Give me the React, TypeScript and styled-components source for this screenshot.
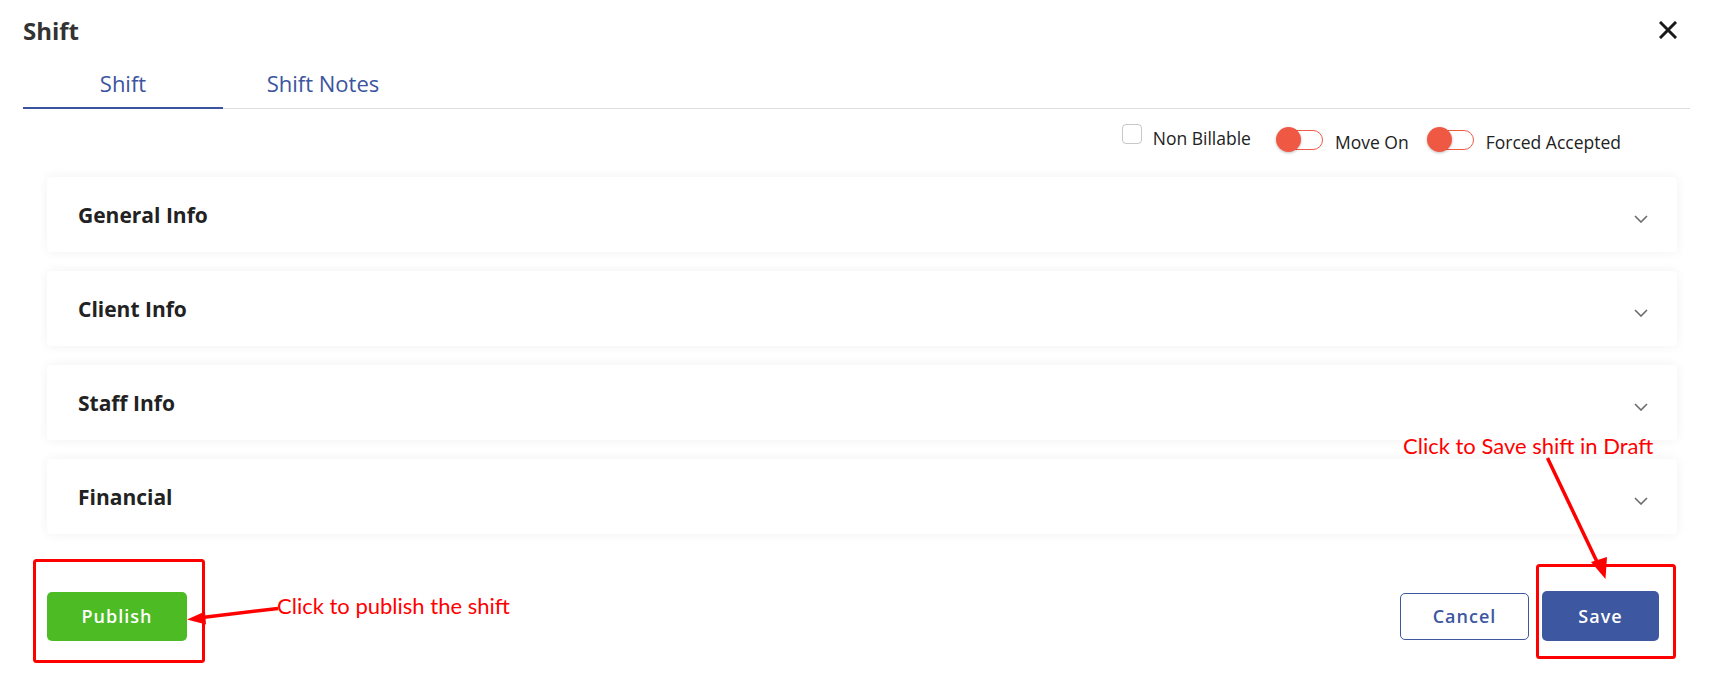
import React from "react";
import styled, { createGlobalStyle } from "styled-components";

const UI_FONT = `"Open Sans", "Noto Sans", Arial, sans-serif`;

const GlobalStyle = createGlobalStyle`
  html, body { margin: 0; padding: 0; background: #ffffff; }
  body { font-family: ${UI_FONT}; color: #222; }
  * { box-sizing: border-box; }
`;

const Page = styled.div`
  position: relative;
  width: 1710px;
  height: 680px;
  padding: 0 20px 0 23px;
  overflow: hidden;
`;

const Header = styled.div`
  height: 62px;
  display: flex;
  align-items: center;
  justify-content: space-between;
  padding-right: 13px;
`;

const Title = styled.h1`
  margin: 0;
  font-size: 24px;
  line-height: 1;
  font-weight: 700;
  color: #333333;
`;

const CloseButton = styled.button`
  border: 0;
  background: transparent;
  padding: 0;
  width: 18px;
  height: 18px;
  display: flex;
  align-items: center;
  justify-content: center;
  margin-top: -2px;
  cursor: pointer;
`;

const TabList = styled.div`
  display: flex;
  height: 47px;
  border-bottom: 1px solid #dedede;
`;

const Tab = styled.div<{ $active?: boolean }>`
  width: 200px;
  display: flex;
  align-items: center;
  justify-content: center;
  padding-bottom: 4px;
  margin-bottom: -1px;
  font-size: 22px;
  font-weight: 500;
  color: #3b54a0;
  border-bottom: 2px solid ${(p) => (p.$active ? "#3b54a0" : "transparent")};
`;

const OptionsRow = styled.div`
  height: 62px;
  display: flex;
  justify-content: flex-end;
  align-items: center;
  padding-right: 69px;
`;

const CheckGroup = styled.label`
  display: flex;
  align-items: flex-start;
  gap: 11px;
  margin-right: 25px;
  margin-top: -8px;
  font-size: 17.5px;
  color: #222;
`;

const CheckBox = styled.span`
  width: 20px;
  height: 20px;
  border: 1.5px solid #c8c8c8;
  border-radius: 4px;
  background: #fff;
`;

const CheckText = styled.span`
  line-height: 20px;
  margin-top: 4px;
`;

const ToggleGroup = styled.div<{ $last?: boolean }>`
  display: flex;
  align-items: center;
  gap: 12px;
  margin-right: ${(p) => (p.$last ? 0 : 18)}px;
  font-size: 17.5px;
  color: #222;
`;

const Switch = styled.span`
  position: relative;
  width: 47px;
  height: 26px;
  display: block;
`;

const SwitchTrack = styled.span`
  position: absolute;
  left: 4px;
  right: 0;
  top: 3px;
  height: 20px;
  border: 1.5px solid #f05a45;
  border-radius: 10px;
  background: #fff;
`;

const SwitchThumb = styled.span`
  position: absolute;
  left: 0;
  top: 0;
  width: 25px;
  height: 25px;
  border-radius: 50%;
  background: #ef5843;
  box-shadow: 0 1px 3px rgba(0, 0, 0, 0.25);
`;

const ToggleText = styled.span`
  margin-top: 3px;
`;

const Sections = styled.div`
  display: flex;
  flex-direction: column;
  gap: 19px;
  margin: 6px 13px 0 24px;
`;

const Card = styled.div`
  height: 75px;
  background: #fff;
  border-radius: 4px;
  box-shadow: 0 0 12px rgba(0, 0, 0, 0.06);
  display: flex;
  align-items: center;
  justify-content: space-between;
  padding: 0 29px 0 31px;
`;

const CardTitle = styled.h2`
  margin: 0;
  font-size: 21px;
  font-weight: 700;
  color: #222;
`;

const Chevron = styled.svg`
  margin-top: 9px;
`;

const Footer = styled.div`
  display: flex;
  align-items: center;
  justify-content: space-between;
  margin-top: 57px;
  padding: 0 31px 0 24px;
`;

const ButtonGroup = styled.div`
  display: flex;
  align-items: center;
  gap: 13px;
`;

const Button = styled.button<{ $variant: "publish" | "cancel" | "save" }>`
  font-family: ${UI_FONT};
  font-size: 18px;
  font-weight: 600;
  border-radius: 5px;
  cursor: pointer;
  letter-spacing: 1px;
  ${(p) =>
    p.$variant === "publish"
      ? `width:140px;height:49px;background:#4cbb24;color:#fff;border:0;`
      : p.$variant === "save"
      ? `width:117px;height:50px;background:#3d57a0;color:#fff;border:0;`
      : `width:129px;height:47px;background:#fff;color:#3d57a0;border:1px solid #3d57a0;`}
`;

const Overlay = styled.svg`
  position: absolute;
  left: 0;
  top: 0;
  pointer-events: none;
`;

const Note = styled.div<{ $x: number; $y: number }>`
  position: absolute;
  left: ${(p) => p.$x}px;
  top: ${(p) => p.$y}px;
  font-family: Lato, "Liberation Sans", sans-serif;
  font-size: 22px;
  line-height: 1;
  color: #ff0000;
  white-space: nowrap;
  pointer-events: none;
`;

const sections = ["General Info", "Client Info", "Staff Info", "Financial"];

function Toggle({ label, last }: { label: string; last?: boolean }) {
  return (
    <ToggleGroup $last={last}>
      <Switch>
        <SwitchTrack />
        <SwitchThumb />
      </Switch>
      <ToggleText>{label}</ToggleText>
    </ToggleGroup>
  );
}

export default function App() {
  return (
    <>
      <GlobalStyle />
      <Page>
        <Header>
          <Title>Shift</Title>
          <CloseButton aria-label="Close">
            <svg width="18" height="18" viewBox="0 0 18 18">
              <path d="M2 2 L16 16 M16 2 L2 16" stroke="#1a1a1a" strokeWidth="3" strokeLinecap="square" />
            </svg>
          </CloseButton>
        </Header>
        <TabList>
          <Tab $active>Shift</Tab>
          <Tab>Shift Notes</Tab>
        </TabList>
        <OptionsRow>
          <CheckGroup>
            <CheckBox />
            <CheckText>Non Billable</CheckText>
          </CheckGroup>
          <Toggle label="Move On" />
          <Toggle label="Forced Accepted" last />
        </OptionsRow>
        <Sections>
          {sections.map((s) => (
            <Card key={s}>
              <CardTitle>{s}</CardTitle>
              <Chevron width="14" height="8" viewBox="0 0 14 8">
                <polyline points="1,1 7,7 13,1" fill="none" stroke="#6b6b6b" strokeWidth="1.6" />
              </Chevron>
            </Card>
          ))}
        </Sections>
        <Footer>
          <Button $variant="publish">Publish</Button>
          <ButtonGroup>
            <Button $variant="cancel">Cancel</Button>
            <Button $variant="save">Save</Button>
          </ButtonGroup>
        </Footer>

        <Overlay width="1710" height="680" viewBox="0 0 1710 680">
          <rect x="34.5" y="560.5" width="169" height="101" rx="2" fill="none" stroke="#ff0000" strokeWidth="3" />
          <rect x="1537.5" y="565.5" width="137" height="92" rx="2" fill="none" stroke="#ff0000" strokeWidth="3" />
          <line x1="278" y1="608.5" x2="198" y2="618" stroke="#ff0000" strokeWidth="3.5" />
          <polygon points="187,619.5 205,611.5 206,624.5" fill="#ff0000" />
          <line x1="1547.5" y1="458" x2="1599" y2="566" stroke="#ff0000" strokeWidth="3.5" />
          <polygon points="1605.5,579 1591,562 1607,557" fill="#ff0000" />
        </Overlay>
        <Note $x={277} $y={595}>Click to publish the shift</Note>
        <Note $x={1403} $y={435}>Click to Save shift in Draft</Note>
      </Page>
    </>
  );
}
